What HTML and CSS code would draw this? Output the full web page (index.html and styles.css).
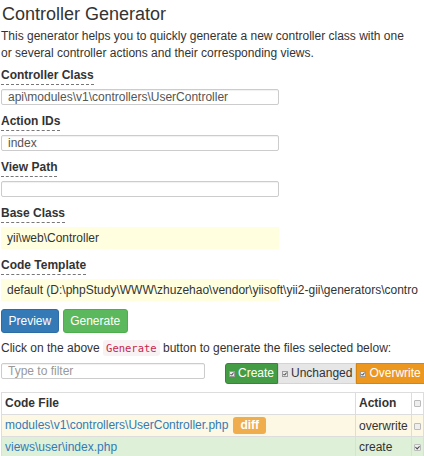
FILE: index.html
```html
<!DOCTYPE html>
<html>
<head>
<meta charset="utf-8">
<link rel="stylesheet" href="styles.css">
</head>
<body>
<div class="page">
  <h1 class="title">Controller Generator</h1>
  <p class="intro">This generator helps you to quickly generate a new controller class with one<br>or several controller actions and their corresponding views.</p>

  <div class="field">
    <label class="label">Controller Class</label>
    <input class="input" type="text" value="api\modules\v1\controllers\UserController">
  </div>
  <div class="field">
    <label class="label">Action IDs</label>
    <input class="input" type="text" value="index">
  </div>
  <div class="field">
    <label class="label">View Path</label>
    <input class="input" type="text" value="">
  </div>
  <div class="field">
    <label class="label">Base Class</label>
    <div class="sticky">yii\web\Controller</div>
  </div>
  <div class="field">
    <label class="label">Code Template</label>
    <div class="sticky">default (D:\phpStudy\WWW\zhuzehao\vendor\yiisoft\yii2-gii\generators\contro</div>
  </div>

  <div class="actions">
    <button class="btn btn-primary">Preview</button>
    <button class="btn btn-success">Generate</button>
  </div>

  <p class="hint">Click on the above <code class="code">Generate</code> button to generate the files selected below:</p>

  <div class="filter-row">
    <input class="input filter" type="text" placeholder="Type to filter">
    <div class="btn-group">
      <span class="gbtn gbtn-create"><svg class="cb" viewBox="0 0 6 6"><rect x="0.5" y="0.5" width="5" height="5" fill="#e8e8e8" stroke="#9a9a9a"/><path d="M1.5 3 L2.6 4.2 L4.6 1.6" fill="none" stroke="#333" stroke-width="1"/></svg>Create</span><span class="gbtn gbtn-unchanged"><svg class="cb" viewBox="0 0 6 6"><rect x="0.5" y="0.5" width="5" height="5" fill="#e8e8e8" stroke="#9a9a9a"/><path d="M1.5 3 L2.6 4.2 L4.6 1.6" fill="none" stroke="#333" stroke-width="1"/></svg>Unchanged</span><span class="gbtn gbtn-overwrite"><svg class="cb" viewBox="0 0 6 6"><rect x="0.5" y="0.5" width="5" height="5" fill="#e8e8e8" stroke="#9a9a9a"/><path d="M1.5 3 L2.6 4.2 L4.6 1.6" fill="none" stroke="#333" stroke-width="1"/></svg>Overwrite</span>
    </div>
  </div>

  <table class="files">
    <colgroup><col class="c-file"><col class="c-action"><col class="c-check"></colgroup>
    <thead>
      <tr><th>Code File</th><th>Action</th><th class="check"><span class="tick"></span></th></tr>
    </thead>
    <tbody>
      <tr class="row-overwrite">
        <td><a class="link">modules\v1\controllers\UserController.php</a><span class="badge">diff</span></td>
        <td>overwrite</td>
        <td class="check"><span class="tick"></span></td>
      </tr>
      <tr class="row-create">
        <td><a class="link">views\user\index.php</a></td>
        <td>create</td>
        <td class="check"><span class="tick checked"></span></td>
      </tr>
    </tbody>
  </table>
</div>
</body>
</html>
```

FILE: styles.css
```css
html, body {
  margin: 0;
  padding: 0;
  background: #fff;
  overflow: hidden;
}
body {
  font-family: "Liberation Sans", Arial, sans-serif;
  font-size: 12px;
  color: #333;
}
.page {
  padding-left: 1px;
  width: 423px;
}
.title {
  font-size: 18px;
  font-weight: normal;
  line-height: 22px;
  margin: 3px 0 0 1px;
  color: #333;
}
.intro {
  margin: 3px 0 5px 0;
  line-height: 17px;
}
.field {
  display: flex;
  flex-direction: column;
  align-items: flex-start;
  gap: 4px;
  margin-bottom: 8px;
}
.label {
  font-weight: bold;
  line-height: 16px;
  padding-bottom: 1px;
  border-bottom: 1px dashed #777;
}
.input {
  box-sizing: border-box;
  width: 278px;
  height: 16px;
  border: 1px solid #ccc;
  border-radius: 2px;
  padding: 0 6px;
  font-family: "Liberation Sans", Arial, sans-serif;
  font-size: 12px;
  color: #555;
  background: #fff;
  box-shadow: inset 0 1px 1px rgba(0,0,0,0.06);
  outline: none;
}
.sticky {
  box-sizing: border-box;
  width: 278px;
  height: 22px;
  line-height: 22px;
  padding: 0 6px;
  background: #ffffe0;
  white-space: nowrap;
  overflow: visible;
}
.actions {
  display: flex;
  gap: 4px;
}
.btn {
  font-family: "Liberation Sans", Arial, sans-serif;
  font-size: 12px;
  height: 24px;
  padding: 0 6.5px;
  border: 1px solid transparent;
  border-radius: 3px;
  color: #fff;
  cursor: pointer;
}
.btn-primary {
  background: #337ab7;
  border-color: #2e6da4;
}
.btn-success {
  background: #5cb85c;
  border-color: #4cae4c;
}
.hint {
  margin: 7px 0 6px 0;
  line-height: 17px;
}
.code {
  font-family: "DejaVu Sans Mono", "Liberation Mono", monospace;
  font-size: 10.5px;
  color: #c7254e;
  background: #f9f2f4;
  padding: 2px 3px;
  border-radius: 3px;
}
.filter-row {
  display: flex;
  align-items: flex-start;
  gap: 20px;
  width: max-content;
}
.filter {
  width: 204px;
}
.filter::placeholder {
  color: #999;
}
.btn-group {
  display: flex;
}
.gbtn {
  display: inline-flex;
  align-items: center;
  gap: 3px;
  height: 21px;
  box-sizing: border-box;
  padding: 0 3px;
  line-height: 17px;
  border: 1px solid transparent;
}
.cb {
  width: 6px;
  height: 6px;
  flex-shrink: 0;
}
.gbtn-create {
  background: #449d44;
  border-color: #398439;
  color: #fff;
  border-radius: 3px 0 0 3px;
}
.gbtn-unchanged {
  background: #e6e6e6;
  border-color: #d4d4d4;
  color: #333;
}
.gbtn-overwrite {
  background: #ec971f;
  border-color: #d58512;
  color: #fff;
}
.files {
  margin-top: 8px;
  border-collapse: collapse;
  table-layout: fixed;
  width: 422px;
}
.c-file { width: 354px; }
.c-action { width: 56px; }
.c-check { width: 12px; }
.files th, .files td {
  border: 1px solid #ddd;
  padding: 2px 3px;
  line-height: 16px;
  text-align: left;
  white-space: nowrap;
  overflow: hidden;
}
.files th {
  font-weight: bold;
  line-height: 17px;
}
.files td.check, .files th.check {
  padding: 0;
  text-align: center;
}
.tick {
  display: inline-block;
  width: 5px;
  height: 5px;
  border: 1px solid #bbb;
  background: #eee;
  border-radius: 1px;
  vertical-align: middle;
  position: relative;
}
.tick.checked::after {
  content: "";
  position: absolute;
  left: 1px;
  top: 0;
  width: 2px;
  height: 3px;
  border: solid #444;
  border-width: 0 1px 1px 0;
  transform: rotate(45deg);
}
.link {
  color: #337ab7;
  text-decoration: none;
}
.badge {
  display: inline-block;
  margin-left: 5px;
  background: #f0ad4e;
  color: #fff;
  font-weight: bold;
  padding: 0 7px;
  height: 17px;
  line-height: 17px;
  border-radius: 3px;
  vertical-align: top;
}
.row-overwrite td { background: #fcf8e3; }
.row-create td { background: #dff0d8; }
```
